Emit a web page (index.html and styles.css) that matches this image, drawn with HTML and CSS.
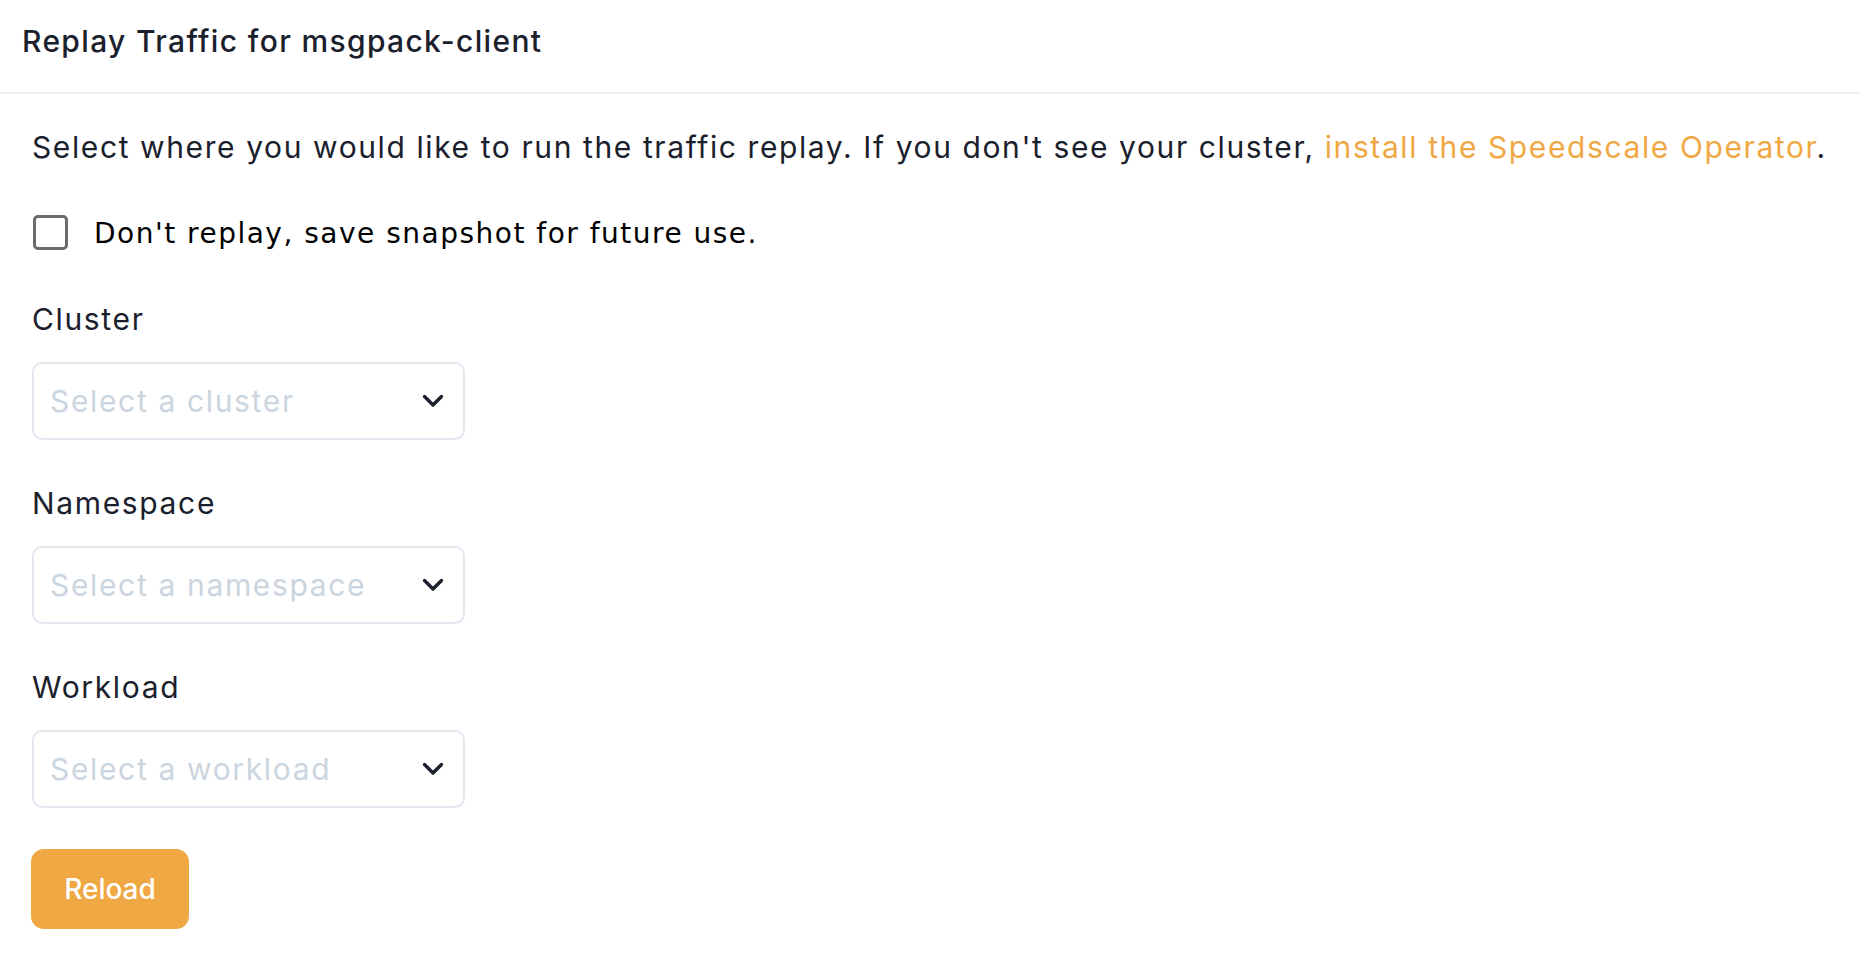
FILE: index.html
```html
<!DOCTYPE html>
<html lang="en">
<head>
<meta charset="utf-8">
<title>Replay Traffic for msgpack-client</title>
<link rel="stylesheet" href="styles.css">
</head>
<body>
  <header class="header">
    <h1 class="title">Replay Traffic for msgpack-client</h1>
  </header>
  <main class="content">
    <p class="intro">Select where you would like to run the traffic replay. If you don't see your cluster, <a class="link" href="#">install the Speedscale Operator</a>.</p>
    <label class="check-row">
      <span class="checkbox"></span>
      <span class="check-label">Don't replay, save snapshot for future use.</span>
    </label>

    <div class="field">
      <div class="field-label">Cluster</div>
      <div class="select">
        <span class="placeholder">Select a cluster</span>
        <svg class="chevron" width="22" height="14" viewBox="0 0 22 14"><polyline points="2.5,2.5 11,11 19.5,2.5" fill="none" stroke="#1a202c" stroke-width="3.4" stroke-linecap="round" stroke-linejoin="round"/></svg>
      </div>
    </div>

    <div class="field">
      <div class="field-label">Namespace</div>
      <div class="select">
        <span class="placeholder">Select a namespace</span>
        <svg class="chevron" width="22" height="14" viewBox="0 0 22 14"><polyline points="2.5,2.5 11,11 19.5,2.5" fill="none" stroke="#1a202c" stroke-width="3.4" stroke-linecap="round" stroke-linejoin="round"/></svg>
      </div>
    </div>

    <div class="field">
      <div class="field-label">Workload</div>
      <div class="select">
        <span class="placeholder">Select a workload</span>
        <svg class="chevron" width="22" height="14" viewBox="0 0 22 14"><polyline points="2.5,2.5 11,11 19.5,2.5" fill="none" stroke="#1a202c" stroke-width="3.4" stroke-linecap="round" stroke-linejoin="round"/></svg>
      </div>
    </div>

    <button class="btn" type="button">Reload</button>
  </main>
</body>
</html>
```

FILE: styles.css
```css
html, body {
  margin: 0;
  padding: 0;
  background: #ffffff;
}

body {
  font-family: Inter, "Open Sans", sans-serif;
  color: #1a202c;
}

.header {
  box-sizing: border-box;
  height: 94px;
  padding: 26px 22px 0;
  border-bottom: 2px solid #edf1f5;
}

.title {
  margin: 0;
  font-size: 30px;
  line-height: 30px;
  font-weight: 500;
  letter-spacing: 1.35px;
  color: #1a202c;
}

.content {
  padding: 0 32px;
  display: flex;
  flex-direction: column;
  align-items: flex-start;
}

.intro {
  margin: 38px 0 0;
  font-size: 30px;
  line-height: 30px;
  font-weight: 400;
  letter-spacing: 1.6px;
  color: #1a202c;
}

.link {
  color: #efa843;
  text-decoration: none;
}

.check-row {
  display: flex;
  align-items: center;
  gap: 26px;
  margin-top: 53px;
  margin-left: 1px;
}

.checkbox {
  box-sizing: border-box;
  width: 35px;
  height: 35px;
  border: 3.5px solid #6b6b6b;
  border-radius: 5px;
  background: #fff;
}

.check-label {
  font-family: "DejaVu Sans", sans-serif;
  font-size: 28px;
  line-height: 30px;
  letter-spacing: 1.5px;
  color: #000;
  position: relative;
  top: 1px;
}

.field {
  display: flex;
  flex-direction: column;
  gap: 28px;
  margin-top: 54px;
}

.field + .field {
  margin-top: 48px;
}

.field-label {
  font-size: 30px;
  line-height: 30px;
  letter-spacing: 1.65px;
  color: #1a202c;
}

.select {
  box-sizing: border-box;
  width: 433px;
  height: 78px;
  border: 2px solid #e2e8f0;
  border-radius: 10px;
  display: flex;
  align-items: center;
  justify-content: space-between;
  padding: 0 19px 0 16px;
  background: #fff;
}

.placeholder {
  font-size: 30px;
  line-height: 30px;
  letter-spacing: 1.65px;
  color: #cbd5e0;
}

.chevron {
  display: block;
}

.btn {
  margin-top: 41px;
  margin-left: -1px;
  width: 158px;
  height: 80px;
  border: none;
  border-radius: 13px;
  background: #efa843;
  color: #fff;
  font-family: Inter, "Open Sans", sans-serif;
  font-size: 28px;
  font-weight: 500;
  padding: 0;
  cursor: pointer;
}
```
